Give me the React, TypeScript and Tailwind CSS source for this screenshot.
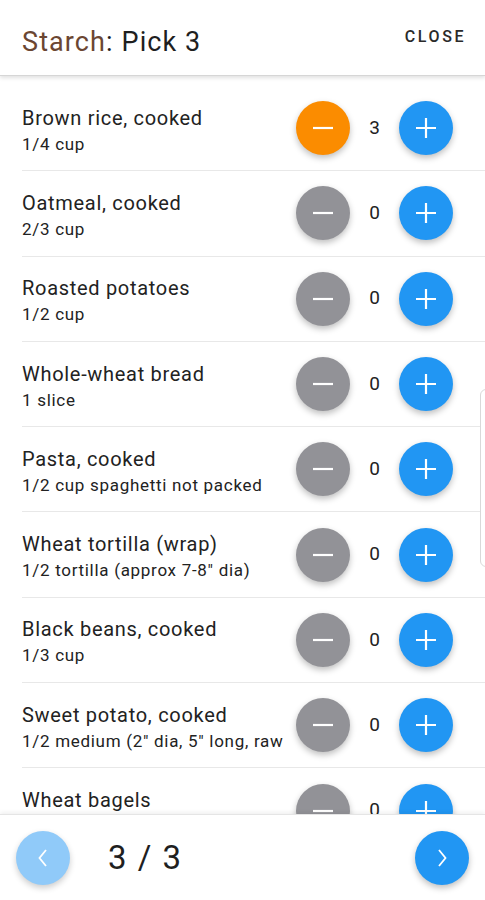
import React from 'react';

const items = [
  { name: 'Brown rice, cooked', serving: '1/4 cup', count: 3 },
  { name: 'Oatmeal, cooked', serving: '2/3 cup', count: 0 },
  { name: 'Roasted potatoes', serving: '1/2 cup', count: 0 },
  { name: 'Whole-wheat bread', serving: '1 slice', count: 0 },
  { name: 'Pasta, cooked', serving: '1/2 cup spaghetti not packed', count: 0 },
  { name: 'Wheat tortilla (wrap)', serving: '1/2 tortilla (approx 7-8" dia)', count: 0 },
  { name: 'Black beans, cooked', serving: '1/3 cup', count: 0 },
  { name: 'Sweet potato, cooked', serving: '1/2 medium (2" dia, 5" long, raw', count: 0 },
  { name: 'Wheat bagels', serving: '1/4 bagel', count: 0 },
];

function Minus() {
  return (
    <svg width="22" height="22" viewBox="0 0 22 22">
      <path d="M1 11h20" stroke="white" strokeWidth="2.2" />
    </svg>
  );
}

function Plus() {
  return (
    <svg width="24" height="24" viewBox="0 0 24 24">
      <path d="M2 12h20M12 2v20" stroke="white" strokeWidth="2.2" />
    </svg>
  );
}

export default function App() {
  return (
    <div
      className="relative h-[900px] w-[485px] overflow-hidden bg-white flex flex-col"
      style={{ fontFamily: 'Roboto, "Noto Sans", sans-serif' }}
    >
      {/* Header */}
      <div className="relative z-10 h-[76px] shrink-0 flex items-center justify-between pl-[22px] pr-[19px] bg-white border-b border-[#d6d6d6] shadow-[0_2px_4px_rgba(0,0,0,0.12)]">
        <h1 className="text-[27px] tracking-[1.1px] text-[#1f1f1f] mt-[9px]">
          <span className="text-[#6b4632]">Starch</span>: Pick 3
        </h1>
        <button className="text-[16px] font-medium tracking-[0.16em] text-[#2a2a2a] mt-[-2px]">CLOSE</button>
      </div>

      {/* List */}
      <div className="flex-1 overflow-hidden pt-[10px]">
        {items.map((item) => (
          <div
            key={item.name}
            className="ml-[22px] h-[85.3px] flex items-center justify-between border-b border-[#e8e8e8] pr-[32px]"
          >
            <div className="min-w-0 flex-1 mt-[6px]">
              <p className="text-[20px] leading-[26px] tracking-[0.7px] text-[#222] whitespace-nowrap">{item.name}</p>
              <p className="text-[17px] leading-[27px] tracking-[0.7px] text-[#222] whitespace-nowrap">{item.serving}</p>
            </div>
            <div className="flex items-center shrink-0">
              <button
                className={
                  item.count > 0
                    ? 'w-[54px] h-[54px] rounded-full bg-[#fb8c00] flex items-center justify-center shadow-[0_3px_6px_rgba(0,0,0,0.25)]'
                    : 'w-[54px] h-[54px] rounded-full bg-[#929297] flex items-center justify-center shadow-[0_3px_6px_rgba(0,0,0,0.25)]'
                }
              >
                <Minus />
              </button>
              <span className="w-[49px] text-center text-[19px] text-[#222]">{item.count}</span>
              <button className="w-[54px] h-[54px] rounded-full bg-[#2196f3] flex items-center justify-center shadow-[0_3px_6px_rgba(0,0,0,0.25)]">
                <Plus />
              </button>
            </div>
          </div>
        ))}
      </div>

      {/* Scroll edge overlay */}
      <div className="absolute left-[480px] top-[389px] w-[12px] h-[178px] rounded-[6px] border border-[#d9d9d9] bg-white" />

      {/* Footer */}
      <div className="absolute bottom-0 left-0 right-0 z-10 h-[86px] flex items-center justify-between px-[16px] bg-white border-t border-[#e5e5e5] shadow-[0_-2px_4px_rgba(0,0,0,0.06)]">
        <div className="flex items-center">
          <button className="w-[54px] h-[54px] rounded-full bg-[#90caf9] flex items-center justify-center shadow-[0_3px_6px_rgba(0,0,0,0.2)]">
            <svg width="14" height="22" viewBox="0 0 14 22">
              <path d="M10 3L3.5 11l6.5 8" stroke="white" strokeWidth="1.8" fill="none" />
            </svg>
          </button>
          <span className="ml-[38px] text-[33px] tracking-[1.5px] text-[#1f1f1f]">3 / 3</span>
        </div>
        <button className="w-[54px] h-[54px] rounded-full bg-[#2196f3] flex items-center justify-center shadow-[0_3px_6px_rgba(0,0,0,0.25)]">
          <svg width="14" height="22" viewBox="0 0 14 22">
            <path d="M4 3l6.5 8L4 19" stroke="white" strokeWidth="1.8" fill="none" />
          </svg>
        </button>
      </div>
    </div>
  );
}
